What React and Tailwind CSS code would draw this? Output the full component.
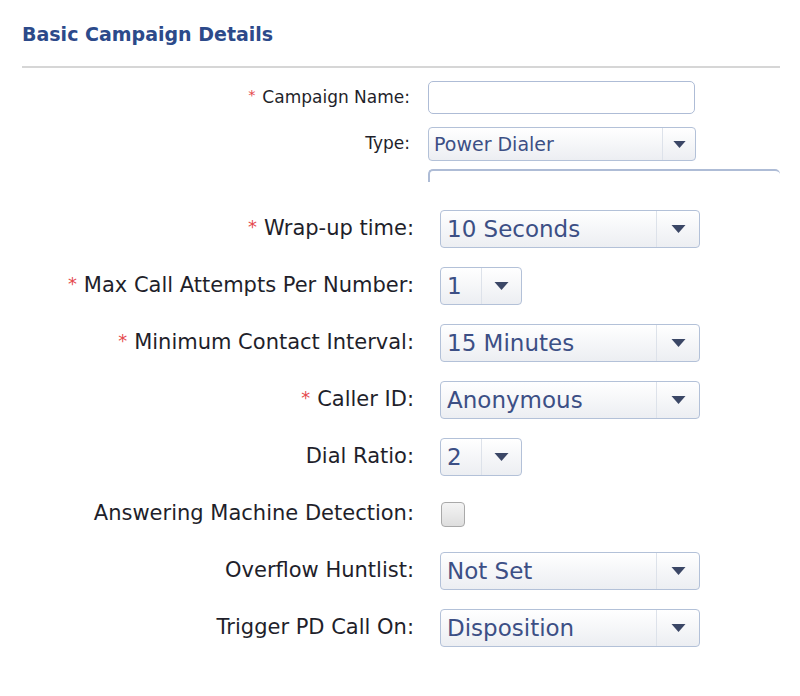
import React from 'react';

const Arrow = ({ className }) => (
    <svg viewBox="0 0 14 8" className={className}>
        <path d="M0 0 H14 L7 8 Z" fill="#3b4766" />
    </svg>
);

const Req = () => <span className="text-[#e5484d] mr-[7px] relative -top-[2px] text-[0.85em]">*</span>;

// small-scale select (top part of the form)
const TopSelect = ({ value }) => (
    <div className="flex h-[34px] w-[268px] rounded-[4px] border border-[#b3c1d8] bg-gradient-to-b from-white to-[#eceef2] text-[19px] text-[#3c4f85]">
        <div className="flex flex-1 items-center pl-[5px]">{value}</div>
        <div className="flex w-[33px] items-center justify-center border-l border-[#dde2ea]">
            <Arrow className="w-[13px] h-[7px]" />
        </div>
    </div>
);

const Select = ({ value, small }) => (
    <div className={`flex h-[38px] rounded-[4px] border border-[#b3c1d8] bg-gradient-to-b from-white to-[#eceef2] text-[23px] text-[#3c4f85] ${small ? 'w-[82px]' : 'w-[260px]'}`}>
        <div className="flex flex-1 items-center pl-[6px]">{value}</div>
        <div className={`flex items-center justify-center border-l border-[#dde2ea] ${small ? 'w-[40px]' : 'w-[43px]'}`}>
            <Arrow className="w-[15px] h-[8px]" />
        </div>
    </div>
);

const rows = [
    { label: 'Wrap-up time:', req: true, value: '10 Seconds' },
    { label: 'Max Call Attempts Per Number:', req: true, value: '1', small: true },
    { label: 'Minimum Contact Interval:', req: true, value: '15 Minutes' },
    { label: 'Caller ID:', req: true, value: 'Anonymous' },
    { label: 'Dial Ratio:', value: '2', small: true },
    { label: 'Answering Machine Detection:', checkbox: true },
    { label: 'Overflow Huntlist:', value: 'Not Set' },
    { label: 'Trigger PD Call On:', value: 'Disposition' },
];

export default function App() {
    return (
        <div className="w-[800px] h-[696px] bg-white pl-[22px] pr-[20px] pt-[22px] font-['DejaVu_Sans',sans-serif] text-[#1f1f2b]">
            <h2 className="text-[19px] leading-[24px] font-bold text-[#2c4a8a]">Basic Campaign Details</h2>
            <div className="mt-[20px] h-[2px] bg-[#d6d6d6]"></div>

            {/* top part */}
            <div className="mt-[13px] grid grid-cols-[388px_auto] gap-x-[18px] text-[17px]">
                <div className="flex items-center justify-end h-[33px]"><Req />Campaign Name:</div>
                <div className="h-[33px] w-[267px] rounded-[5px] border border-[#aebcd6] bg-white"></div>

                <div className="mt-[13px] flex items-center justify-end h-[34px]">Type:</div>
                <div className="mt-[13px]"><TopSelect value="Power Dialer" /></div>

                <div></div>
                <div className="mt-[8px] h-[13px] w-[352px] overflow-hidden">
                    <div className="h-[30px] rounded-t-[5px] border-t-2 border-l-2 border-[#aebcd6]"></div>
                </div>
            </div>

            {/* lower part */}
            <div className="mt-[28px] grid grid-cols-[392px_auto] gap-x-[26px] gap-y-[19px] text-[21px]">
                {rows.map((r) => (
                    <React.Fragment key={r.label}>
                        <div className="flex h-[38px] items-center justify-end">
                            {r.req && <Req />}
                            {r.label}
                        </div>
                        <div className="flex h-[38px] items-center">
                            {r.checkbox ? (
                                <div className="ml-[1px] h-[25px] w-[24px] rounded-[4px] border border-[#a9a9a9] bg-gradient-to-b from-[#f4f4f4] to-[#dedede]"></div>
                            ) : (
                                <Select value={r.value} small={r.small} />
                            )}
                        </div>
                    </React.Fragment>
                ))}
            </div>
        </div>
    );
}
